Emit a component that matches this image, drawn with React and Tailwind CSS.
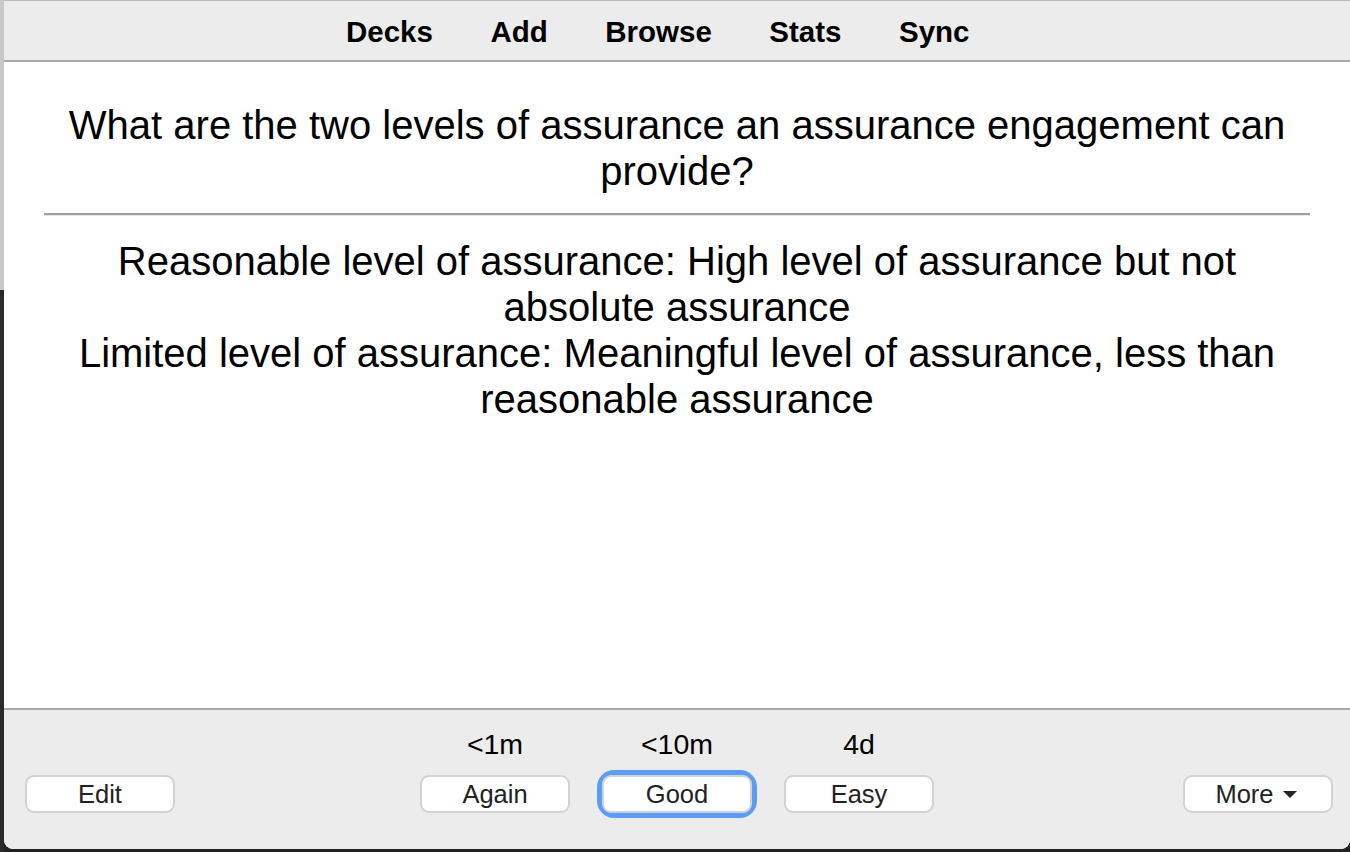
import React from "react";

function Btn({ children, className = "" }) {
  return (
    <div
      className={
        "w-[150px] h-[38px] rounded-[9px] bg-white border-2 border-[#d2d2d2] flex items-center justify-center text-[25.5px] text-[#222] " +
        className
      }
    >
      {children}
    </div>
  );
}

export default function App() {
  const links = ["Decks", "Add", "Browse", "Stats", "Sync"];
  return (
    <div className="w-[1350px] h-[852px] bg-[#222] flex overflow-hidden font-['Liberation_Sans',Arial,sans-serif]">
      <div className="w-[4px] flex flex-col">
        <div className="h-[290px] bg-[#c8c8c8]" />
        <div className="flex-1 bg-[#2a2a2a]" />
      </div>
      <div className="flex-1 h-[849px] flex flex-col rounded-b-[9px] overflow-hidden bg-white">
        <div className="h-[62px] shrink-0 bg-[#ececec] border-t border-t-[#b8b8b8] border-b-2 border-b-[#a9a9a9] flex items-center pl-[342px] gap-[57.5px] pt-[2px]">
          {links.map((l) => (
            <span key={l} className="font-bold text-[29.5px] text-black leading-none">
              {l}
            </span>
          ))}
        </div>
        <div className="flex-1 bg-white px-[40px] pt-[40px] text-center text-[40px] leading-[46px] text-black">
          <div>What are the two levels of assurance an assurance engagement can provide?</div>
          <div className="mt-[19px] mb-[22px] h-0 border-t-2 border-t-[#a0a0a0] border-b border-b-[#e8e8e8]" />
          <div>
            Reasonable level of assurance: High level of assurance but not absolute assurance
            <br />
            Limited level of assurance: Meaningful level of assurance, less than reasonable assurance
          </div>
        </div>
        <div className="h-[141px] shrink-0 bg-[#ececec] border-t-2 border-t-[#a9a9a9] grid grid-cols-[1fr_auto_1fr] items-end pb-[36px]">
          <div className="pl-[21px]">
            <Btn>Edit</Btn>
          </div>
          <div className="flex gap-[32px]">
            {[
              ["<1m", "Again", false],
              ["<10m", "Good", true],
              ["4d", "Easy", false],
            ].map(([t, b, f]) => (
              <div key={b} className="flex flex-col items-center">
                <div className="text-[28.5px] leading-[32px] text-black mb-[15px]">{t}</div>
                <div className={f ? "rounded-[12px] ring-[5px] ring-[#5b9cf6]" : ""}>
                  <Btn>{b}</Btn>
                </div>
              </div>
            ))}
          </div>
          <div className="flex justify-end pr-[17px]">
            <Btn className="gap-[9px] pr-[4px]">
              <span>More</span>
              <svg width="14" height="8" viewBox="0 0 14 8" className="mt-[2px]">
                <path d="M0 0 L14 0 L7 7 Z" fill="#222" />
              </svg>
            </Btn>
          </div>
        </div>
      </div>
    </div>
  );
}
